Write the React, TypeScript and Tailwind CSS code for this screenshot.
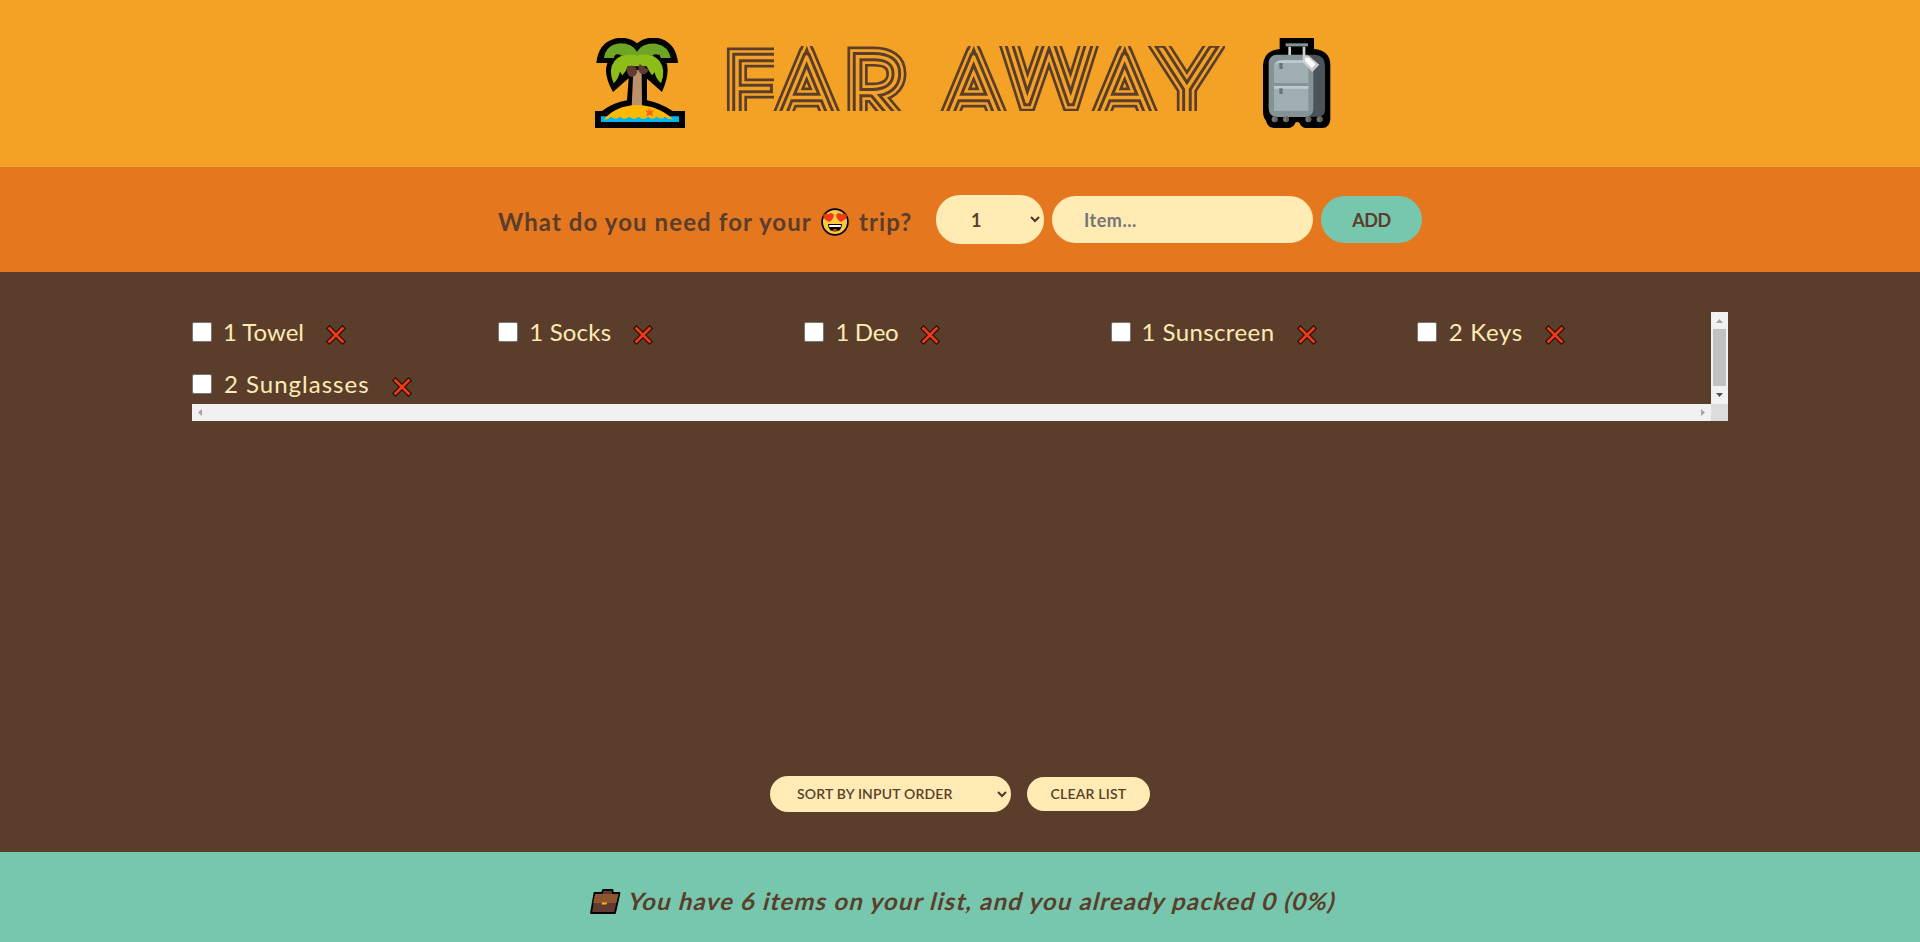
import React from "react";

const BROWN = "#5a3e2b";
const AMBER = "#f4a226";

function Palm() {
  return (
    <svg className="h-[90px] w-[90px]" viewBox="45 54 270 270">
      <path d="M49 129Q54 70 103 56Q145 47 171 70Q200 46 243 56Q289 72 294 129H260Q270 162 246 216L201 176V241Q244 250 278 273H315V324H45V273H66Q99 248 141 241L146 175L99 216Q69 163 82 129Z" fill="#000" />
      <path d="M72 114Q78 73 122 70Q155 70 171 95Q188 68 228 71Q266 78 272 114H242Q238 96 238 106Q225 99 218 107H125Q105 96 102 114Z" fill="#6fa524" />
      <path d="M101 190Q83 149 104 122Q127 96 171 106Q215 96 238 122Q259 150 243 190Q226 174 224 157L216 166Q204 150 200 139H143Q139 155 127 166L120 155Q115 177 101 190Z" fill="#8cbd18" />
      <path d="M160 150H185L186 260H155Z" fill="#ba916b" />
      <path d="M139 145Q153 129 169 144Q177 163 159 171Q141 173 139 145M179 132Q190 140 206 149Q200 165 184 162Q168 153 179 132" fill="#613b32" />
      <path d="M63 289H297V306H63Z" fill="#00b7f0" />
      <path d="M72 298Q106 257 171 255Q237 257 279 298Q266 299 255 290Q244 301 230 290Q217 302 204 290Q190 303 176 290Q162 302 148 290Q134 302 120 290Q107 302 94 290Q83 300 72 298" fill="#ffb900" />
      <path d="M207 263L212 272L222 270L216 279L220 289L209 284L199 290L202 279L195 271L205 272Z" fill="#ff6217" />
    </svg>
  );
}

function Suitcase() {
  return (
    <svg className="h-[90px] w-[68px]" viewBox="1058 54 204 270">
      <path d="M1108 54H1211V87Q1260 92 1260 135V290Q1262 323 1235 324H1185Q1173 323 1166 307H1156Q1149 324 1135 324H1091Q1072 323 1067 302Q1058 291 1058 275V135Q1061 91 1108 87Z" fill="#000" />
      <path d="M1185 104H1215Q1244 107 1244 137V270Q1244 290 1222 290H1180Z" fill="#4b5358" />
      <rect x="1075" y="104" width="134" height="187" rx="24" fill="#859397" />
      <path d="M1091 142Q1091 121 1112 121H1194V273H1091Z" fill="#a0adb1" />
      <path d="M1096 128Q1102 121 1112 121H1194V129H1102Q1095 131 1092 139M1091 198H1194V206H1091Z" fill="#bdcbd0" />
      <path d="M1091 189H1194V198H1091Z" fill="#859397" />
      <path d="M1107 129h10v18h-10zM1107 205h10v17h-10z" fill="#697579" />
      <path d="M1126 70H1193V79H1126Z" fill="#859397" />
      <path d="M1134 80h8v25h-8zM1177 80h8v28h-8z" fill="#cfcfcf" />
      <path d="M1178 105L1195 107L1227 134L1206 156L1176 126Z" fill="#ccc" />
      <path d="M1184 113L1196 114L1215 132L1205 144L1184 124Z" fill="#fff" />
      <g fill="#767676"><circle cx="1093" cy="298" r="9" /><circle cx="1127" cy="298" r="9" /><circle cx="1194" cy="298" r="9" /><circle cx="1228" cy="298" r="9" /></g>
      <path d="M1093 289a9 9 0 0 1 0 18zM1127 289a9 9 0 0 1 0 18zM1194 289a9 9 0 0 1 0 18zM1228 289a9 9 0 0 1 0 18z" fill="#555" opacity=".6" />
    </svg>
  );
}

function Title() {
  return (
    <h1 className="mt-2 ml-10 mr-[38px]">
      <svg className="block h-[65px] w-[500px]" viewBox="726 46 500 65">
        <clipPath id="bands">
          <path d="M726 46H775V108L801 46H1226V111H726Z" />
        </clipPath>
        <g clipPath="url(#bands)" strokeLinejoin="miter" strokeMiterlimit="3" fontFamily="Lato, sans-serif" fontWeight="100">
          <g stroke={BROWN} strokeWidth="19">
            <text id="title" fontSize="90" xmlSpace="preserve">
              <tspan x="727" y="120">F</tspan><tspan x="779" y="120">A</tspan><tspan x="846" y="128" fontSize="103">R</tspan><tspan> </tspan><tspan x="946" y="120">A</tspan><tspan x="1005" y="102">W</tspan><tspan x="1097" y="120">A</tspan><tspan x="1160" y="118" fontSize="98">Y</tspan>
            </text>
          </g>
          <use href="#title" stroke={AMBER} strokeWidth="13.6" />
          <use href="#title" stroke={BROWN} strokeWidth="8.4" />
          <use href="#title" stroke={AMBER} fill={AMBER} strokeWidth="2.4" />
        </g>
      </svg>
    </h1>
  );
}

function HeartEyes() {
  return (
    <svg className="h-7 w-7" viewBox="0 0 28 28">
      <circle cx="14" cy="14" r="12.9" fill="#ffc83d" stroke="#000" strokeWidth="1.7" />
      <path d="M8.5 14Q1.8 11 2.2 7.8Q3.5 4.6 7.4 6.3Q10.3 3.6 12.7 6.5Q13.5 10 8.5 14M19.5 14Q14.5 10 15.3 6.5Q17.7 3.6 20.6 6.3Q24.5 4.6 25.8 7.8Q26.2 11 19.5 14" fill="#f03a17" />
      <path d="M7 16H21Q20.8 23.4 14 23.4Q7.2 23.4 7 16Z" fill="#000" />
      <path d="M8.2 17H19.8V19H8.2Z" fill="#fff" />
      <path d="M11 22.3Q14 19.5 17 22.3Q14 23.6 11 22.3" fill="#f03a17" />
    </svg>
  );
}

function Chevron() {
  return (
    <svg className="h-[7px] w-[10px]" viewBox="0 0 10 7" fill="none" stroke="#4f3626" strokeWidth="2">
      <path d="M1 1L5 5L9 1" />
    </svg>
  );
}

function Cross() {
  return (
    <svg className="mt-[5px] h-5 w-5 shrink-0" viewBox="0 0 20 20" strokeLinecap="square">
      <path d="M3.5 3.5L16.5 16.5M16.5 3.5L3.5 16.5" stroke="#1c0d08" strokeWidth="5" />
      <path d="M3.5 3.5L16.5 16.5M16.5 3.5L3.5 16.5" stroke="#f03a17" strokeWidth="2.8" />
    </svg>
  );
}

function Briefcase() {
  return (
    <svg className="h-[25px] w-[31px]" viewBox="0 0 31 25">
      <path d="M4.5 4H12L13 1H22.5V4H29.5L25 24H1Z" fill="#613b32" stroke="#000" strokeWidth="1.8" strokeLinejoin="round" />
      <path d="M5.2 4.9H28.5L26.3 14H3Z" fill="#8e562e" />
      <path d="M14.5 4L15 2.6H21L20.7 4" stroke="#613b32" strokeWidth="1.5" fill="none" />
      <path d="M12 13.5H17L16.6 15.6H11.6Z" fill="#ffb900" />
    </svg>
  );
}

const items = [
  { label: "1 Towel", box: "w-[80px] ml-[11px]" },
  { label: "1 Socks", box: "w-[81px] ml-[11px] tracking-[0.2px]" },
  { label: "1 Deo", box: "w-[62px] ml-[11px] tracking-[-0.3px]" },
  { label: "1 Sunscreen", box: "w-[132px] ml-[11px] tracking-[0.4px]" },
  { label: "2 Keys", box: "w-[73px] ml-[12px] tracking-[0.7px]" },
  { label: "2 Sunglasses", box: "w-[145px] ml-[12px] tracking-[1px]" },
];

export default function App() {
  return (
    <div className="flex h-[942px] w-[1920px] flex-col overflow-hidden bg-[#5a3e2b] font-['Lato',sans-serif] text-[#5a3e2b]">
      <header className="flex h-[167px] shrink-0 items-start justify-center bg-[#f4a226] pt-[38px] pl-[6px]">
        <Palm />
        <Title />
        <Suitcase />
      </header>

      <form className="flex h-[105px] shrink-0 items-center bg-[#e5771f] pl-[498px]">
        <h3 className="mt-1 flex w-[438px] shrink-0 items-center whitespace-nowrap text-2xl font-bold">
          <span className="w-[323px] tracking-[1.1px]">What do you need for your</span>
          <HeartEyes />
          <span className="ml-[10px] tracking-[1.1px]">trip?</span>
        </h3>
        <div className="flex h-[49px] w-[108px] items-center justify-between rounded-[24px] bg-[#ffebb3] pr-1 pl-[35px] text-lg font-bold">
          <span>1</span>
          <Chevron />
        </div>
        <div className="ml-2 flex h-[47px] w-[261px] items-center rounded-[24px] bg-[#ffebb3] pl-8 text-lg font-bold tracking-[0.5px] text-[#757575]">Item...</div>
        <button type="button" className="ml-2 h-[47px] w-[101px] rounded-[24px] bg-[#76c7ad] text-lg font-bold tracking-[-0.5px]">ADD</button>
      </form>

      <main className="flex h-[580px] shrink-0 flex-col items-center justify-between pt-10 pb-10">
        <div className="flex w-[1536px] flex-col">
          <div className="flex h-[92px]">
            <ul className="grid w-[1519px] grid-cols-5 content-start gap-x-[12px] text-2xl text-[#ffebb3]">
              {items.map((item) => (
                <li key={item.label} className="flex h-[52px] items-center pb-[12px]">
                  <span className="h-5 w-5 shrink-0 rounded-[2px] border border-[#767676] bg-white" />
                  <span className={`${item.box} mr-[23px] whitespace-nowrap`}>{item.label}</span>
                  <Cross />
                </li>
              ))}
            </ul>
            <div className="flex w-[17px] flex-col items-center bg-[#f1f1f1]">
              <svg className="h-[17px] w-[17px]" viewBox="0 0 17 17"><path d="M5 11L8.5 7L12 11Z" fill="#a3a3a3" /></svg>
              <div className="h-[57px] w-[13px] bg-[#c1c1c1]" />
              <svg className="h-[17px] w-[17px]" viewBox="0 0 17 17"><path d="M5 7H12L8.5 11Z" fill="#505050" /></svg>
            </div>
          </div>
          <div className="flex h-[17px] bg-[#f1f1f1]">
            <svg className="h-[17px] w-[17px]" viewBox="0 0 17 17"><path d="M10 5V12L6 8.5Z" fill="#a3a3a3" /></svg>
            <div className="flex-1" />
            <svg className="h-[17px] w-[17px]" viewBox="0 0 17 17"><path d="M7 5V12L11 8.5Z" fill="#a3a3a3" /></svg>
            <div className="w-[17px] bg-[#dcdcdc]" />
          </div>
        </div>
        <div className="flex items-center gap-4 text-sm font-semibold">
          <div className="flex h-9 w-[241px] items-center justify-between rounded-[18px] bg-[#ffebb3] pr-1 pl-[27px]">
            <span className="tracking-[0.17px]">SORT BY INPUT ORDER</span>
            <Chevron />
          </div>
          <button type="button" className="h-[34px] w-[123px] rounded-[17px] bg-[#ffebb3] tracking-[0.2px]">CLEAR LIST</button>
        </div>
      </main>

      <footer className="flex h-[90px] shrink-0 items-center bg-[#76c7ad] pt-2 pl-[590px] text-2xl font-bold">
        <Briefcase />
        <span className="ml-[8px] -skew-x-[14deg] whitespace-nowrap tracking-[1.17px]">You have 6 items on your list, and you already packed 0 (0%)</span>
      </footer>
    </div>
  );
}
